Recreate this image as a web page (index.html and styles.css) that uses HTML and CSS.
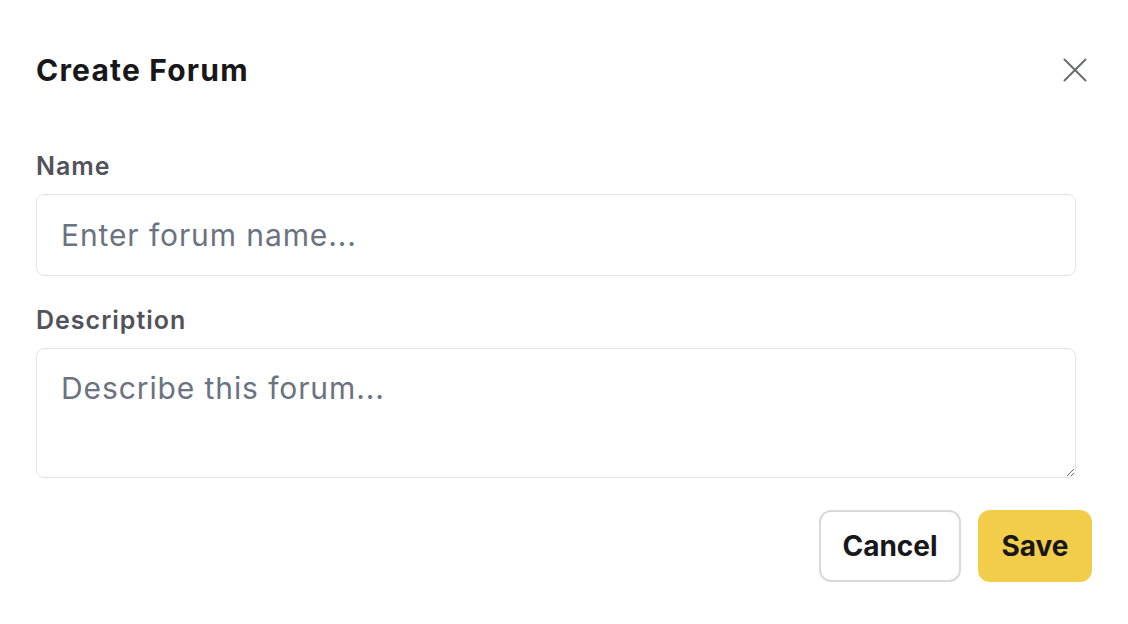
FILE: index.html
```html
<!DOCTYPE html>
<html lang="en">
<head>
<meta charset="utf-8">
<title>Create Forum</title>
<link rel="stylesheet" href="styles.css">
</head>
<body>
<div class="dialog">
  <div class="header">
    <h2 class="title">Create Forum</h2>
    <button class="close" aria-label="Close">
      <svg width="24" height="24" viewBox="0 0 24 24" fill="none" stroke="#6b6b73" stroke-width="2" stroke-linecap="round"><path d="M1.5 1.5L22.5 22.5M22.5 1.5L1.5 22.5"/></svg>
    </button>
  </div>
  <form class="form">
    <div class="field">
      <label class="label" for="name">Name</label>
      <input id="name" class="input" type="text" placeholder="Enter forum name...">
    </div>
    <div class="field">
      <label class="label" for="desc">Description</label>
      <textarea id="desc" class="textarea" placeholder="Describe this forum..."></textarea>
    </div>
    <div class="footer">
      <button type="button" class="btn btn-cancel">Cancel</button>
      <button type="button" class="btn btn-save">Save</button>
    </div>
  </form>
</div>
</body>
</html>
```
FILE: styles.css
```css
* { box-sizing: border-box; }
html, body { margin: 0; padding: 0; background: #ffffff; }
body { font-family: Inter, "Noto Sans", sans-serif; color: #18181b; }

.dialog {
  padding: 40px 36px 0 36px;
}

.header {
  display: flex;
  align-items: center;
  justify-content: space-between;
  height: 60px;
}

.title {
  margin: 0;
  font-size: 30px;
  font-weight: 700;
  letter-spacing: 1.2px;
  color: #18181b;
}

.close {
  width: 32px;
  height: 32px;
  padding: 0;
  margin-right: 1px;
  border: 0;
  background: transparent;
  display: flex;
  align-items: center;
  justify-content: center;
}

.form {
  display: flex;
  flex-direction: column;
  padding-top: 50px;
}

.field {
  display: flex;
  flex-direction: column;
  gap: 12px;
  margin-right: 16px;
  margin-bottom: 28px;
}

.label {
  font-size: 25px;
  line-height: 32px;
  font-weight: 600;
  letter-spacing: 1px;
  color: #52525b;
}

.input, .textarea {
  width: 100%;
  border: 1px solid #e4e4e7;
  border-radius: 8px;
  font-family: Inter, "Noto Sans", sans-serif;
  font-size: 30px;
  letter-spacing: 0.9px;
  color: #18181b;
  padding: 0 24px;
  background: #fff;
  outline: none;
}

.input { height: 82px; }

.textarea {
  height: 130px;
  padding-top: 20px;
  line-height: 38px;
  resize: vertical;
  display: block;
}

.input::placeholder, .textarea::placeholder { color: #6b7280; }

.footer {
  display: flex;
  justify-content: flex-end;
  gap: 17px;
  margin-top: 4px;
}

.btn {
  height: 72px;
  border-radius: 12px;
  font-family: Inter, "Noto Sans", sans-serif;
  font-size: 28px;
  font-weight: 700;
  color: #18181b;
  cursor: pointer;
}

.btn-cancel {
  width: 142px;
  background: #fff;
  border: 2px solid #d9d9dc;
}

.btn-save {
  width: 114px;
  background: #f2cd4a;
  border: 0;
}
```
